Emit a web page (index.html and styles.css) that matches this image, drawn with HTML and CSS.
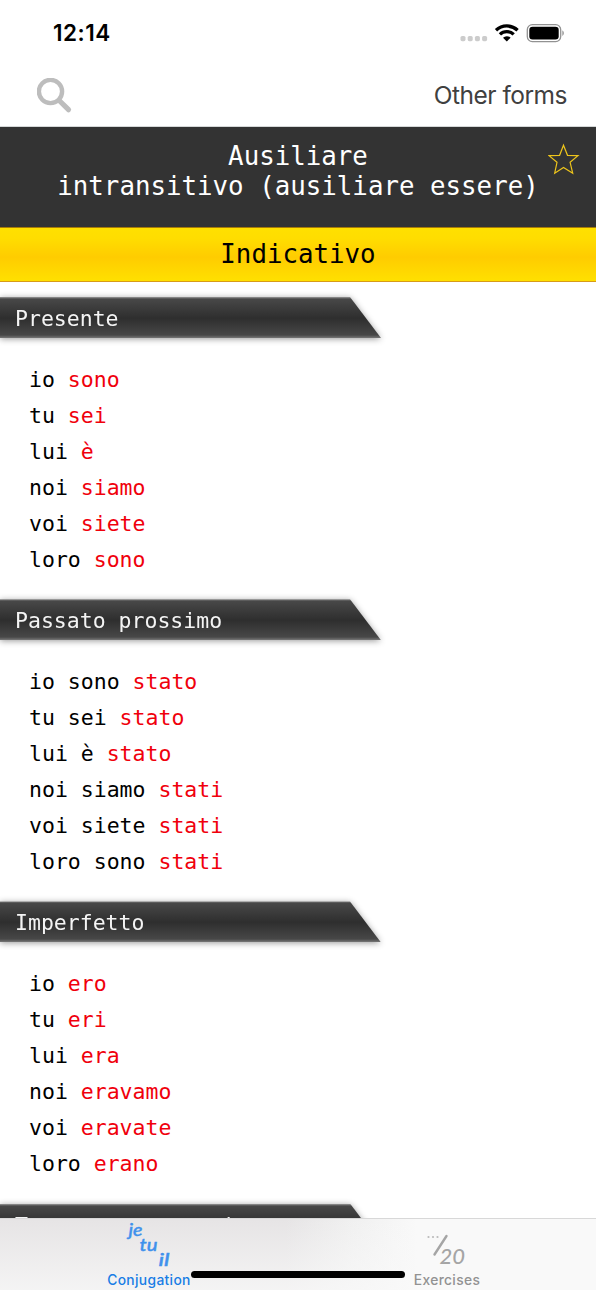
FILE: index.html
```html
<!DOCTYPE html>
<html lang="it">
<head>
<meta charset="utf-8">
<title>Conjugation</title>
<link rel="stylesheet" href="styles.css">
</head>
<body>
<div class="app">
  <header class="status">
    <span class="clock">12:14</span>
    <svg class="status-icons" width="106" height="24" viewBox="0 0 106 24">
      <g fill="#ccc"><rect x=".5" y="13" width="5" height="5.2" rx="1.6"/><rect x="7.7" y="13" width="5" height="5.2" rx="1.6"/><rect x="14.9" y="13" width="5" height="5.2" rx="1.6"/><rect x="22.1" y="13" width="5" height="5.2" rx="1.6"/></g>
      <g fill="none" stroke="#000" stroke-width="3.3">
        <path d="M36 7.3A15.6 15.6 0 0 1 57.6 7.3"/>
        <path d="M39.9 11.4A9.9 9.9 0 0 1 53.7 11.4"/>
      </g>
      <path d="M46.8 18.4L43 14.7A5.5 5.5 0 0 1 50.6 14.7Z"/>
      <rect x="67.3" y="1.7" width="33.4" height="16.9" rx="5" fill="none" stroke="#929292" stroke-width="1.3"/>
      <rect x="69.3" y="3.7" width="29.4" height="12.9" rx="3.3"/>
      <path d="M102.3 7.2A3.4 3.4 0 0 1 102.3 13Z" fill="#999"/>
    </svg>
  </header>
  <nav class="toolbar">
    <svg width="36" height="36" viewBox="0 0 36 36" fill="none" stroke="#bdbdbd"><circle cx="13.5" cy="13.5" r="11.6" stroke-width="4.4"/><path d="M22.2 22.5L31.5 31.7" stroke-width="5.2" stroke-linecap="round"/></svg>
    <span class="other">Other forms</span>
  </nav>
  <div class="verb">
    <div>Ausiliare</div>
    <div>intransitivo (ausiliare essere)</div>
    <svg class="star" width="32" height="32" viewBox="0 0 32 32"><path d="M15.5 2.2L19.5 12.3L30 12.6L22.1 19.3L24.7 30.2L15.5 24.4L6.7 30.2L9 19.3L1 12.6L11.6 12.3Z" fill="none" stroke="#eec51b" stroke-width="1.2"/></svg>
  </div>
  <h1 class="mood">Indicativo</h1>
  <main class="tenses">
    <section class="tense">
      <h2 class="banner"><span>Presente</span></h2>
      <ul><li>io <b>sono</b></li><li>tu <b>sei</b></li><li>lui <b>è</b></li><li>noi <b>siamo</b></li><li>voi <b>siete</b></li><li>loro <b>sono</b></li></ul>
    </section>
    <section class="tense">
      <h2 class="banner"><span>Passato prossimo</span></h2>
      <ul><li>io sono <b>stato</b></li><li>tu sei <b>stato</b></li><li>lui è <b>stato</b></li><li>noi siamo <b>stati</b></li><li>voi siete <b>stati</b></li><li>loro sono <b>stati</b></li></ul>
    </section>
    <section class="tense">
      <h2 class="banner"><span>Imperfetto</span></h2>
      <ul><li>io <b>ero</b></li><li>tu <b>eri</b></li><li>lui <b>era</b></li><li>noi <b>eravamo</b></li><li>voi <b>eravate</b></li><li>loro <b>erano</b></li></ul>
    </section>
    <section class="tense">
      <h2 class="banner"><span>Trapassato prossimo</span></h2>
    </section>
  </main>
  <footer class="tabs">
    <div class="tab active">
      <svg width="50" height="50" viewBox="0 0 50 50" class="hand"><text x="4.5" y="17" textLength="14" lengthAdjust="spacingAndGlyphs">je</text><text x="15.5" y="32" textLength="18" lengthAdjust="spacingAndGlyphs">tu</text><text x="34.5" y="46.5" textLength="11" lengthAdjust="spacingAndGlyphs">il</text></svg>
      <span>Conjugation</span>
    </div>
    <div class="tab">
      <svg width="50" height="50" viewBox="0 0 50 50" class="score"><g fill="#bbb"><circle cx="6.5" cy="18" r="1.1"/><circle cx="11" cy="18" r="1.1"/><circle cx="15.5" cy="18" r="1.1"/></g><path d="M24.5 17L12.5 35.5" stroke="#a5a5a5" stroke-width="2.4" stroke-linecap="round"/><text x="17.5" y="44.5">20</text></svg>
      <span>Exercises</span>
    </div>
    <i class="home"></i>
  </footer>
</div>
</body>
</html>
```

FILE: styles.css
```css
* { box-sizing: border-box; margin: 0; padding: 0; }
body { background: #fff; font-family: Inter, sans-serif; }
.app { position: relative; width: 596px; height: 1290px; overflow: hidden; display: flex; flex-direction: column; }
.status { height: 64px; flex: none; display: flex; justify-content: space-between; padding: 19px 30px 0 53px; }
.clock { font-size: 22.5px; font-weight: 600; line-height: 28px; letter-spacing: .5px; }
.status-icons { margin-top: 4px; }
.toolbar { height: 63px; flex: none; display: flex; justify-content: space-between; padding: 13px 29px 0 37px; border-bottom: 1px solid #d5d8d8; }
.toolbar svg { margin-top: 1px; }
.other { font-size: 24.5px; line-height: 36px; color: #404040; letter-spacing: -0.5px; }
.verb { position: relative; height: 100px; flex: none; padding-top: 14px; background: #333; color: #fff; text-align: center; font: 25.8px/30px "DejaVu Sans Mono", monospace; }
.star { position: absolute; right: 16px; top: 16px; }
.mood { height: 55px; flex: none; border-top: 1px solid #a87c06; border-bottom: 1px solid #d79b18; background: linear-gradient(#ffe000, #fd0 20%, #fc0 55%, #ffe000); text-align: center; font: 25.8px/52px "DejaVu Sans Mono", monospace; }
.tenses { flex: 1; min-height: 0; overflow: hidden; padding-top: 15px; font-family: "DejaVu Sans Mono", monospace; }
.tense { height: 302.2px; }
.banner { width: 381px; height: 41px; filter: drop-shadow(0 1px 3px rgba(0,0,0,.4)); font-size: 21.5px; font-weight: normal; line-height: 43px; color: #f4f4f4; }
.banner span { display: block; height: 41px; padding-left: 15px; background: linear-gradient(#999 0, #484848 2px, #2e2e2e 52%, #474747 38px, #777 41px); clip-path: polygon(0 0, 350px 0, 381px 100%, 0 100%); }
ul { list-style: none; padding: 24px 0 0 29px; font-size: 21.5px; line-height: 36px; }
b { font-weight: normal; color: #f0000c; }
.tabs { position: absolute; left: 0; right: 0; bottom: 0; height: 72px; display: grid; grid-template-columns: 1fr 1fr; border-top: 1px solid #d8d8d8; background: linear-gradient(rgba(249,249,249,0), rgba(249,249,249,.75)), linear-gradient(90deg, #e6e4e5 0, #e6e4e5 48%, #f0f0f0 59%, #f9f9f9 70%); }
.tab { display: flex; flex-direction: column; align-items: center; color: #929292; font-size: 13.8px; font-weight: 500; line-height: 18px; letter-spacing: .35px; }
.tab span { margin-top: 2px; }
.active { color: #187de5; }
.hand, .score { font-family: Lato, sans-serif; font-style: italic; font-weight: 500; letter-spacing: 0; overflow: visible; }
.hand { fill: #3f91ec; stroke: #3f91ec; stroke-width: .4px; font-size: 17px; }
.score { fill: #a5a5a5; font-size: 22px; }
.home { position: absolute; left: 191px; bottom: 12px; width: 214px; height: 7px; border-radius: 4px; background: #000; }
```
